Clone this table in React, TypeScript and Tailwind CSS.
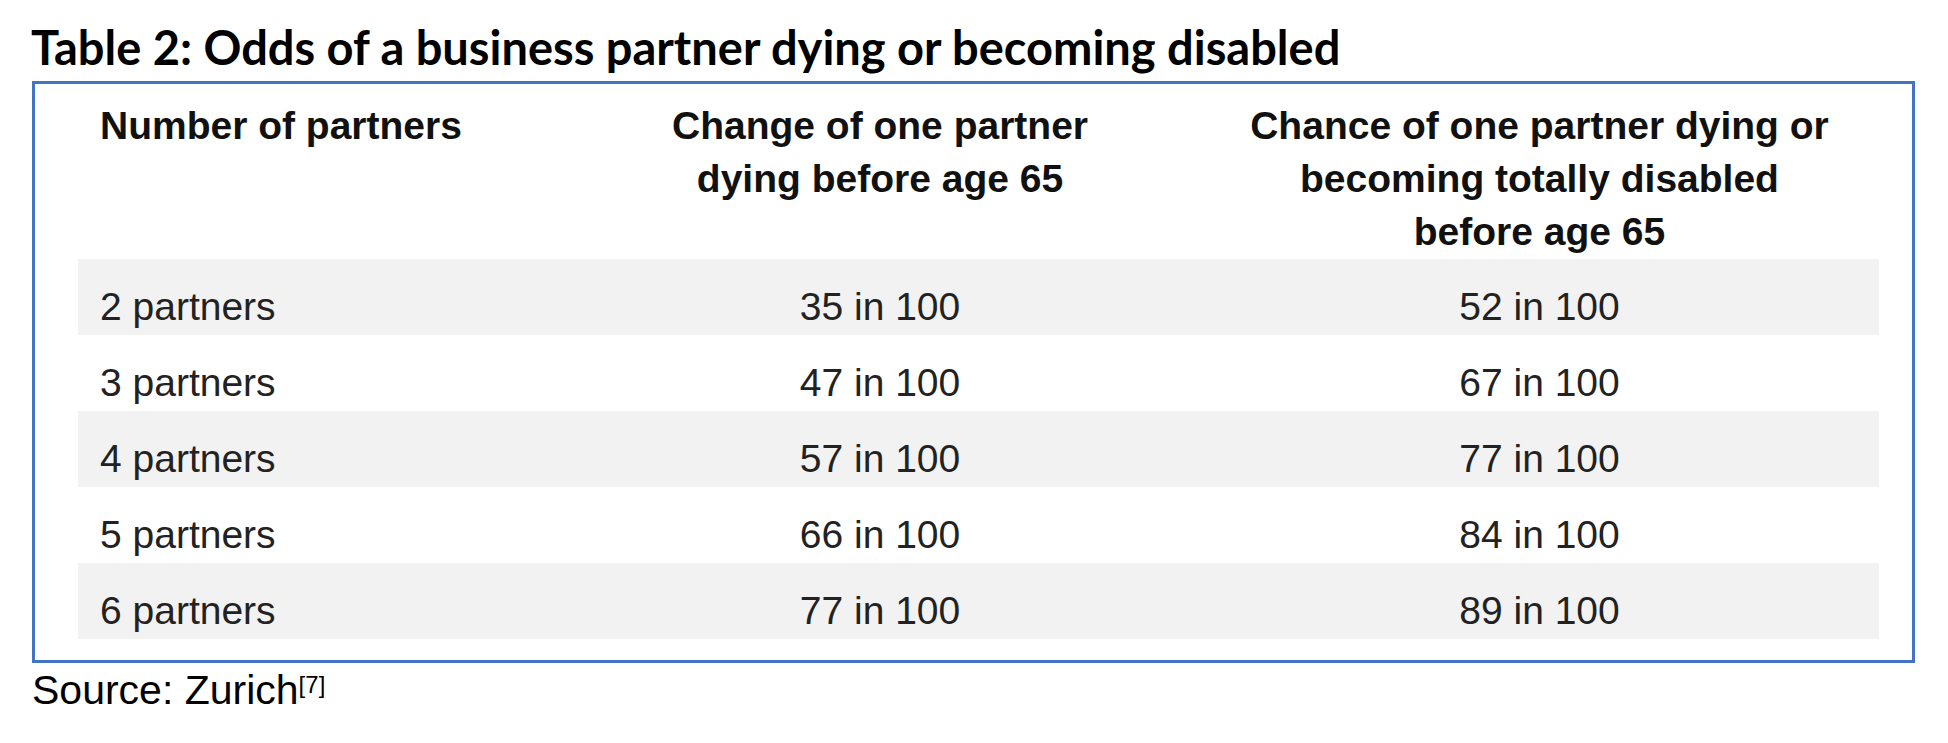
import React from "react";

const rows: [string, string, string][] = [
  ["2 partners", "35 in 100", "52 in 100"],
  ["3 partners", "47 in 100", "67 in 100"],
  ["4 partners", "57 in 100", "77 in 100"],
  ["5 partners", "66 in 100", "84 in 100"],
  ["6 partners", "77 in 100", "89 in 100"],
];

export default function App() {
  return (
    <div className="w-[1948px] h-[743px] bg-white overflow-hidden">
      <div className="h-[81px] pt-[23px] pl-[31px]">
        <h1 className="font-['Lato',sans-serif] font-bold text-[47px] leading-[48px] text-black whitespace-nowrap">
          Table 2: Odds of a business partner dying or becoming disabled
        </h1>
      </div>
      <div className="ml-[32px] w-[1883px] border-[3px] border-[#4472c4] pl-[43px] pr-[33px] pb-[21px] font-['Liberation_Sans',Arial,sans-serif]">
        <div className="grid grid-cols-[482px_640px_1fr] h-[175px] pt-[15px] text-[39px] leading-[53px] font-bold text-[#111]">
          <div className="pl-[22px] whitespace-nowrap">Number of partners</div>
          <div className="text-center">
            Change of one partner
            <br />
            dying before age 65
          </div>
          <div className="text-center">
            Chance of one partner dying or
            <br />
            becoming totally disabled
            <br />
            before age 65
          </div>
        </div>
        {rows.map((r, i) => (
          <div
            key={r[0]}
            className={`grid grid-cols-[482px_640px_1fr] h-[76px] pt-[26px] text-[39px] leading-[44px] text-[#222] ${
              i % 2 === 0 ? "bg-[#f2f2f2]" : "bg-white"
            }`}
          >
            <div className="pl-[22px] whitespace-nowrap">{r[0]}</div>
            <div className="text-center">{r[1]}</div>
            <div className="text-center">{r[2]}</div>
          </div>
        ))}
      </div>
      <div className="mt-[4px] pl-[32px] font-['Liberation_Sans',Arial,sans-serif] text-[41px] leading-[47px] text-black">
        Source: Zurich
        <span className="inline-block align-top mt-[6px] text-[24px] leading-[24px]">[7]</span>
      </div>
    </div>
  );
}
